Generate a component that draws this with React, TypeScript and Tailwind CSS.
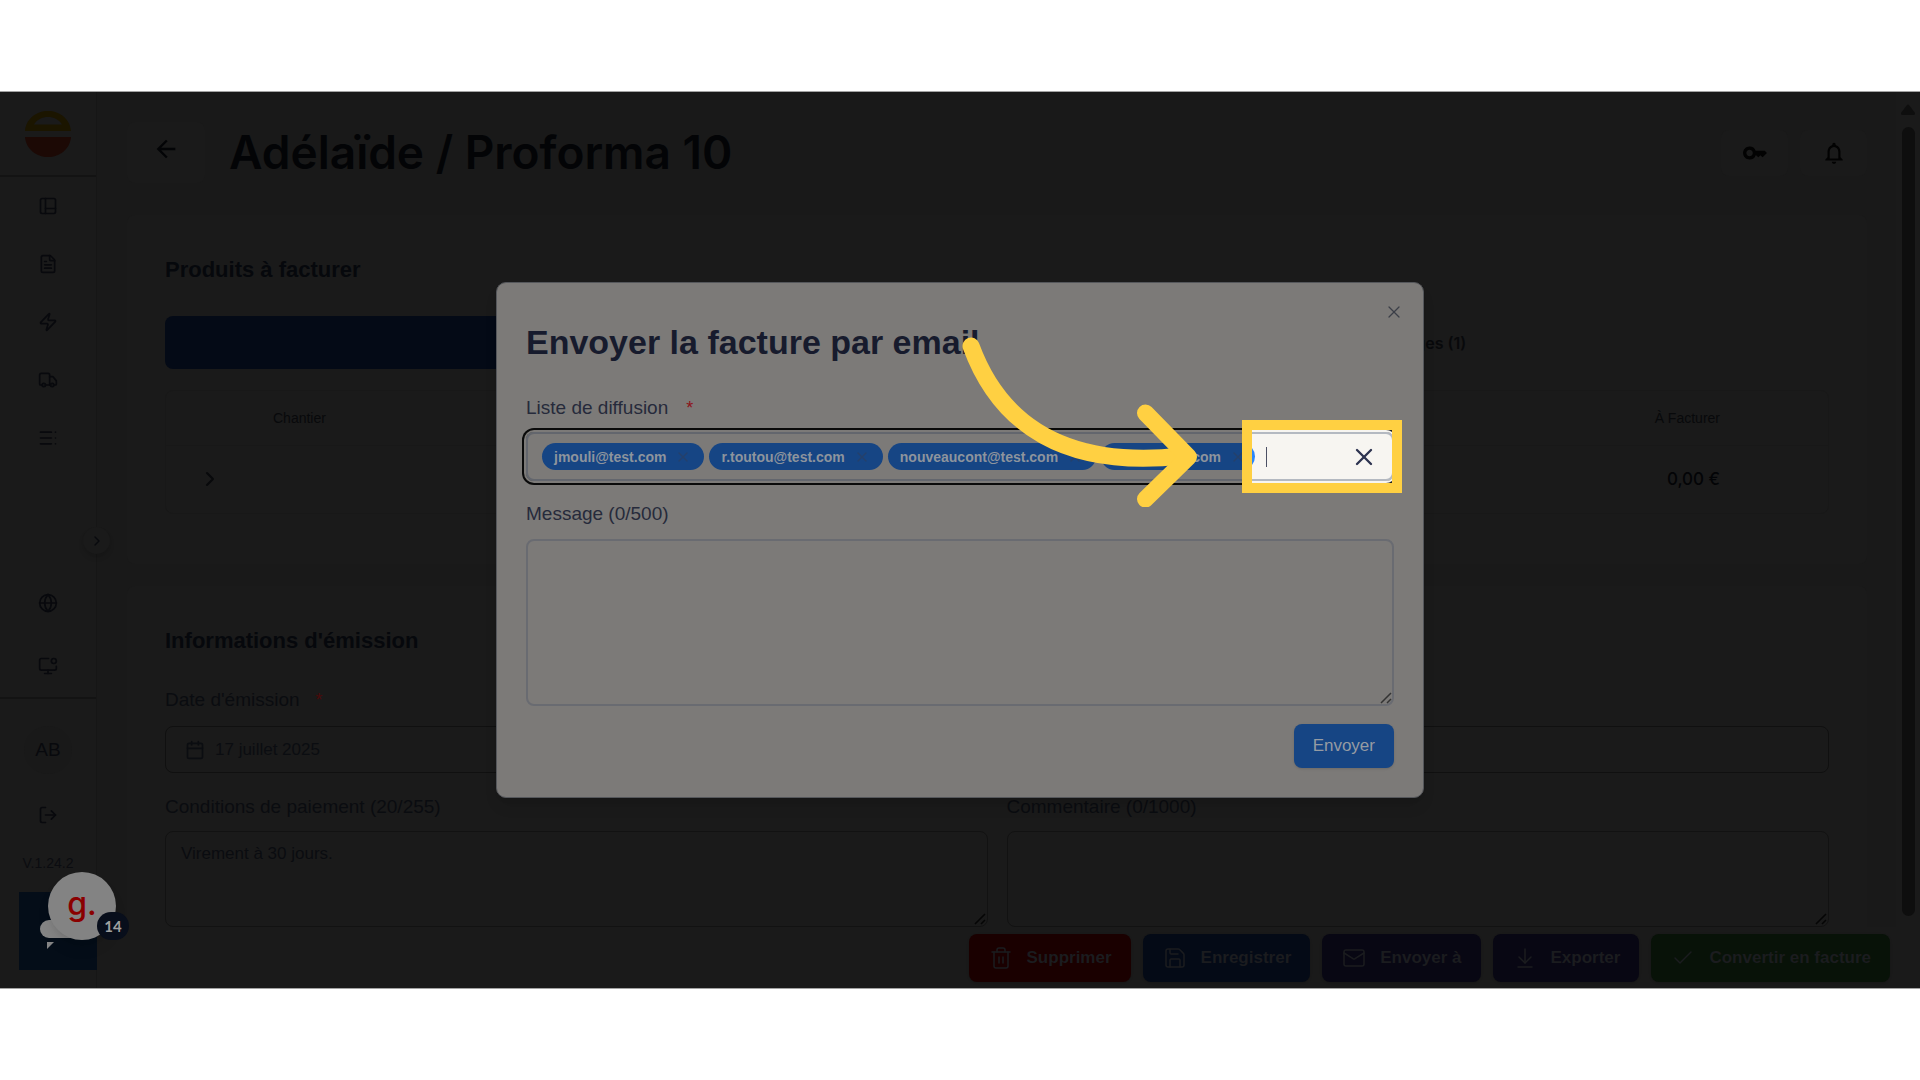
import type { ReactNode } from 'react'
import {
  ArrowDownToLine,
  Calendar,
  Check,
  ChevronRight,
  FileText,
  Globe,
  LogOut,
  Mail,
  MonitorDot,
  PanelsLeftBottom,
  Save,
  TableOfContents,
  Trash2,
  Truck,
  X,
  Zap,
} from 'lucide-react'
import { MdArrowBack, MdKey, MdNotificationsNone } from 'react-icons/md'

const navItems = [
  { label: 'Tableau de bord', icon: PanelsLeftBottom },
  { label: 'Documents', icon: FileText },
  { label: 'Actions', icon: Zap },
  { label: 'Livraisons', icon: Truck },
  { label: 'Listes', icon: TableOfContents },
]

const toolItems = [
  { label: 'Langue', icon: Globe },
  { label: 'Écran', icon: MonitorDot },
]

const footerActions = [
  { label: 'Supprimer', icon: Trash2, color: 'bg-[#1a0000]' },
  { label: 'Enregistrer', icon: Save, color: 'bg-[#040a16]' },
  { label: 'Envoyer à', icon: Mail, color: 'bg-[#080713]' },
  { label: 'Exporter', icon: ArrowDownToLine, color: 'bg-[#080713]' },
  { label: 'Convertir en facture', icon: Check, color: 'bg-[#081208]' },
]

const recipients = ['jmouli@test.com', 'r.toutou@test.com', 'nouveaucont@test.com', 'claire@test.com']

function Logo() {
  return (
    <svg viewBox="0 0 46 46" className="size-[46px]" aria-hidden="true">
      <path
        fillRule="evenodd"
        fill="#1b1500"
        d="M0 20C1 8 11 0 23 0s22 8 23 20zM9 13.500h28C34 8.500 29 6 23 6S12 8.500 9 13.500z"
      />
      <path fill="#1c0905" d="M0 26h46C45 38 35 46 23 46S1 38 0 26z" />
    </svg>
  )
}

function ResizeGrip({ className }: { className: string }) {
  return (
    <svg viewBox="0 0 12 12" className={`pointer-events-none absolute right-[2px] bottom-[2px] size-3 ${className}`} aria-hidden="true">
      <path d="M1 11 11 1M7 11l4-4" stroke="currentColor" strokeWidth="1.500" fill="none" />
    </svg>
  )
}

function Sidebar() {
  return (
    <aside className="relative flex w-[97px] shrink-0 flex-col border-r border-[#161616] bg-[#1a1a1a] text-[#08090d]">
      <div className="flex h-[85px] items-center justify-center border-b-2 border-[#131313]">
        <Logo />
      </div>
      <nav className="flex flex-col">
        {navItems.map(({ label, icon: Icon }) => (
          <a key={label} href="#" aria-label={label} className="flex h-[58px] items-center justify-center">
            <Icon size={20} />
          </a>
        ))}
      </nav>
      <div className="mt-auto flex flex-col border-b-2 border-[#131313]">
        {toolItems.map(({ label, icon: Icon }) => (
          <a key={label} href="#" aria-label={label} className="flex h-[63px] items-center justify-center">
            <Icon size={20} />
          </a>
        ))}
      </div>
      <div className="flex flex-col items-center pt-[27px] pb-[115px]">
        <div className="flex size-12 items-center justify-center rounded-full bg-[#191919] text-[19px]">AB</div>
        <button aria-label="Se déconnecter" className="mt-[31px]">
          <LogOut size={20} />
        </button>
        <span className="mt-7 text-sm text-[#0b0c10]">V.1.24.2</span>
      </div>
      <button
        aria-label="Déplier le menu"
        className="absolute top-[435px] -right-[14px] flex size-[27px] items-center justify-center rounded-full bg-[#1a1a1a] shadow-md"
      >
        <ChevronRight size={16} />
      </button>
    </aside>
  )
}

function SupportWidget() {
  return (
    <div className="absolute bottom-[18px] left-[19px] size-[78px] bg-[#040d18]">
      <div className="absolute top-7 left-[21px] h-[18px] w-12 rounded-full bg-[#858585]" />
      <svg viewBox="0 0 7 7" className="absolute top-[50px] left-7 size-[7px]" aria-hidden="true">
        <path d="M0 0h7L0 7z" fill="#858585" />
      </svg>
      <div className="absolute -top-5 left-[29px] flex size-[68px] items-center justify-center rounded-full bg-[#838383] pb-1 font-[Inter,sans-serif] text-[32px] leading-none font-medium text-[#8a0000] shadow-lg">
        g.
      </div>
      <div className="absolute top-5 left-[78px] flex h-7 w-8 items-center justify-center rounded-full bg-[#080e1b] font-[Lato,sans-serif] text-[15px] font-bold text-[#a0a0a0]">
        14
      </div>
    </div>
  )
}

function Card({ title, className, children }: { title: string; className: string; children: ReactNode }) {
  return (
    <section className={`bg-[#1a1a1a] px-[38px] pt-[38px] ${className}`}>
      <h2 className="text-[22px] leading-[34px] font-bold text-[#06080c]">{title}</h2>
      {children}
    </section>
  )
}

function ProductsCard() {
  return (
    <Card title="Produits à facturer" className="rounded-lg pb-[50px]">
      <div className="mt-[29px] grid h-[53px] grid-cols-2 font-[Inter,sans-serif] text-base font-semibold">
        <button aria-label="Produits" className="rounded-lg bg-[#040a16]" />
        <button className="text-[#08090b]">Décharges (1)</button>
      </div>
      <div className="mt-[21px] rounded-lg border border-[#181818]">
        <table className="w-full">
          <thead>
            <tr className="h-[54px] border-b border-[#181818] text-sm text-[#08090b]">
              <th className="w-[107px]" />
              <th className="text-left font-normal">Chantier</th>
              <th className="pr-[108px] text-right font-normal">À Facturer</th>
            </tr>
          </thead>
          <tbody>
            <tr className="h-[68px]">
              <td className="pl-8">
                <button aria-label="Afficher le détail" className="flex text-[#08090b]">
                  <ChevronRight size={24} />
                </button>
              </td>
              <td />
              <td className="pr-[108px] text-right font-[Inter,sans-serif] text-[17px] font-medium text-[#030406]">0,00 €</td>
            </tr>
          </tbody>
        </table>
      </div>
    </Card>
  )
}

function EmissionCard() {
  return (
    <Card title="Informations d'émission" className="mt-[22px] rounded-t-lg">
      <label htmlFor="date" className="mt-[30px] flex gap-4 text-[19px] leading-6 text-[#0a0c10]">
        Date d'émission <span className="text-lg leading-6 text-[#4a0a0a]">*</span>
      </label>
      <div className="mt-[14px] flex h-[47px] items-center gap-[10px] rounded-lg border border-[#101010] px-[19px] text-[#0b0d11]">
        <Calendar size={20} className="shrink-0" />
        <input id="date" readOnly defaultValue="17 juillet 2025" className="w-full bg-transparent text-[17px] outline-none" />
      </div>
      <div className="mt-[22px] grid grid-cols-2 gap-[19px] text-[#0a0c10]">
        <div>
          <label htmlFor="conditions" className="block text-[19px] leading-6">
            Conditions de paiement (20/255)
          </label>
          <div className="relative mt-3">
            <textarea
              id="conditions"
              defaultValue="Virement à 30 jours."
              className="block h-24 w-full resize-none rounded-lg border border-[#121212] px-[15px] py-2.5 text-[17px] leading-6"
            />
            <ResizeGrip className="text-[#050505]" />
          </div>
        </div>
        <div>
          <label htmlFor="commentaire" className="block text-[19px] leading-6">
            Commentaire (0/1000)
          </label>
          <div className="relative mt-3">
            <textarea
              id="commentaire"
              className="block h-24 w-full resize-none rounded-lg border border-[#121212] px-[15px] py-2.5 text-[17px] leading-6"
            />
            <ResizeGrip className="text-[#050505]" />
          </div>
        </div>
      </div>
    </Card>
  )
}

// Bright area cut out around the end of the recipients field
function Spotlight() {
  return (
    <div className="absolute -top-[14px] -right-[10px] h-[73px] w-[160px] overflow-hidden border-10 border-[#ffd042] bg-[#f7f5f1]">
      <div className="absolute top-[2px] -right-[2px] bottom-[2px] -left-10 rounded-lg border-2 border-[#b4b9c1] shadow-[0_0_0_2px_#f7f5f1,0_0_0_4px_#222222]" />
      <div className="absolute top-[13px] -left-10 h-[27px] w-[43px] rounded-full bg-[#2c86fb]" />
      <div className="relative flex h-full items-center justify-between pr-[14px] pl-[14px]">
        <input id="diffusion" className="h-5 w-20 border-l border-[#4c5064] bg-transparent text-[17px] outline-none" />
        <button type="button" aria-label="Tout effacer" className="flex text-[#2d3350]">
          <X size={28} />
        </button>
      </div>
    </div>
  )
}

function EmailDialog() {
  return (
    <div
      role="dialog"
      aria-labelledby="dialog-title"
      className="relative w-[928px] max-w-full rounded-[10px] border border-[#55575b] bg-[#7c7a78] px-[29px] pt-[30px] pb-[29px] text-[#262a3b] shadow-lg"
    >
      <button aria-label="Fermer" className="absolute top-[19px] right-[19px] flex text-[#3b3f48]">
        <X size={20} strokeWidth={1.500} />
      </button>
      <h2 id="dialog-title" className="text-[34px] leading-[58px] font-bold text-[#171b2d]">
        Envoyer la facture par email
      </h2>
      <label htmlFor="diffusion" className="mt-[25px] flex gap-[18px] text-[19px] leading-6">
        Liste de diffusion <span className="text-lg leading-6 text-[#8e1218]">*</span>
      </label>
      <div className="relative mt-3 flex h-[49px] items-center gap-[5px] rounded-lg border-2 border-[#63666d] px-[14px] ring-2 ring-[#0a0a0a] ring-offset-2 ring-offset-[#7c7a78]">
        {recipients.map((email) => (
          <span
            key={email}
            className="flex h-[27px] items-center gap-3 rounded-full bg-[#164584] pr-4 pl-3 text-sm font-bold text-[#8d949d]"
          >
            {email}
            <button type="button" aria-label={`Retirer ${email}`} className="flex w-2.5 justify-center text-[#24406b]">
              <X size={16} strokeWidth={2} className="shrink-0" />
            </button>
          </span>
        ))}
        <Spotlight />
      </div>
      <label htmlFor="message" className="mt-[21px] block text-[19px] leading-6">
        Message (0/500)
      </label>
      <div className="relative mt-[13px]">
        <textarea id="message" className="block h-[167px] w-full resize-none rounded-lg border-2 border-[#696b71] p-3 text-[17px]" />
        <ResizeGrip className="text-[#333333]" />
      </div>
      <div className="mt-[18px] flex justify-end">
        <button className="h-11 rounded-lg bg-[#164584] px-[19px] text-[17px] font-medium text-[#959ba3] shadow-sm">Envoyer</button>
      </div>
    </div>
  )
}

function PointerArrow() {
  return (
    <svg
      viewBox="0 0 240 180"
      className="pointer-events-none absolute top-[45px] left-[464px] h-[180px] w-[240px]"
      fill="none"
      stroke="#ffd042"
      strokeWidth="17"
      strokeLinecap="round"
      strokeLinejoin="round"
      aria-hidden="true"
    >
      <path d="M11 19C40 98 105 142 222 129" />
      <path d="M185.500 86l43 44-43 42" />
    </svg>
  )
}

export default function App() {
  return (
    <div className="flex min-h-screen flex-col justify-center bg-white font-['Liberation_Sans',Arial,sans-serif]">
      <div className="relative flex border-y border-[#a3a3a3] bg-[#1a1a1a]">
        <Sidebar />
        <div className="flex min-w-0 grow flex-col">
          <main className="mr-[3px] bg-[#191919] pr-[29px] pl-[30px]">
            <header className="flex items-center pt-[30px] pb-8">
              <button aria-label="Retour" className="flex h-[61px] w-[78px] items-center justify-center rounded-lg bg-[#1a1a1a] pb-2 text-[#030406]">
                <MdArrowBack size={28} />
              </button>
              <h1 className="ml-6 font-[Inter,sans-serif] text-[46px] leading-[61px] font-semibold text-[#030406]">
                Adélaïde / Proforma 10
              </h1>
              <div className="ml-auto flex gap-3 text-[#020202]">
                <button aria-label="Accès" className="flex h-[46px] w-[67px] items-center justify-center rounded-lg bg-[#1a1a1a]">
                  <MdKey size={26} />
                </button>
                <button aria-label="Notifications" className="flex h-[46px] w-[67px] items-center justify-center rounded-lg bg-[#1a1a1a]">
                  <MdNotificationsNone size={26} />
                </button>
              </div>
            </header>
            <ProductsCard />
            <EmissionCard />
          </main>
          <footer className="flex justify-end gap-3 pt-[7px] pr-[9px] pb-[6px]">
            {footerActions.map(({ label, icon: Icon, color }) => (
              <button
                key={label}
                className={`flex h-12 items-center gap-[14px] rounded-lg pr-[19px] pl-5 text-[17px] font-bold text-[#1b1c1f] shadow-sm ${color}`}
              >
                <Icon size={24} strokeWidth={1.500} />
                {label}
              </button>
            ))}
          </footer>
        </div>
        <div className="flex w-[21px] shrink-0 flex-col items-center pt-3 pr-[3px] pb-[72px]">
          <svg viewBox="0 0 14 11" className="h-[11px] w-[14px]" aria-hidden="true">
            <path d="M6 1q1-1 2 0l6 8q0 2-1 2H1q-1 0-1-2z" fill="#0e0e0e" />
          </svg>
          <div className="mt-3 w-[13px] grow rounded-full bg-[#0e0e0e]" />
        </div>
        <SupportWidget />
        <div className="absolute inset-x-0 top-[190px] flex justify-center">
          <div className="relative">
            <EmailDialog />
            <PointerArrow />
          </div>
        </div>
      </div>
    </div>
  )
}
